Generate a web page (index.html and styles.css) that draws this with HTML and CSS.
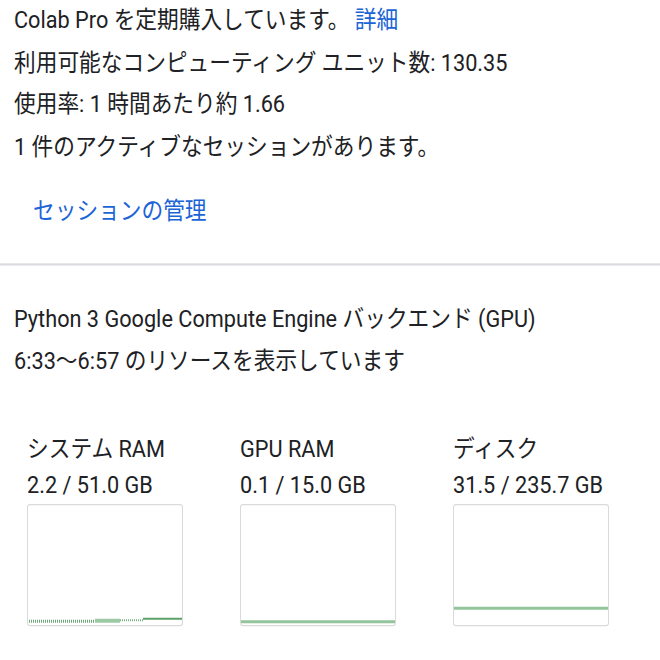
FILE: index.html
```html
<!DOCTYPE html>
<html lang="ja">
<head>
<meta charset="utf-8">
<link rel="stylesheet" href="styles.css">
</head>
<body>
<div class="panel">
  <section class="sub">
    <div class="line">Colab Pro を定期購入しています。 <a class="link">詳細</a></div>
    <div class="line">利用可能なコンピューティング ユニット数: 130.35</div>
    <div class="line">使用率: 1 時間あたり約 1.66</div>
    <div class="line">1 件のアクティブなセッションがあります。</div>
    <div class="actions"><a class="btn">セッションの管理</a></div>
  </section>
  <hr class="divider">
  <section class="backend">
    <div class="line">Python 3 Google Compute Engine バックエンド (GPU)</div>
    <div class="line">6:33〜6:57 のリソースを表示しています</div>
  </section>
  <section class="charts">
    <div class="chart">
      <div class="label">システム RAM</div>
      <div class="label">2.2 / 51.0 GB</div>
      <div class="box">
        <svg viewBox="0 0 156 122" preserveAspectRatio="none">
          <line x1="0" y1="117" x2="68" y2="117" stroke="#6aa877" stroke-width="3" stroke-dasharray="1 1"/>
          <line x1="68" y1="116.5" x2="93" y2="116.5" stroke="#9ccaa5" stroke-width="4"/>
          <line x1="93" y1="116" x2="116" y2="116" stroke="#7cb487" stroke-width="2" stroke-dasharray="1 1"/>
          <line x1="116" y1="114.5" x2="156" y2="114.5" stroke="#5ba268" stroke-width="2"/>
        </svg>
      </div>
    </div>
    <div class="chart">
      <div class="label">GPU RAM</div>
      <div class="label">0.1 / 15.0 GB</div>
      <div class="box">
        <svg viewBox="0 0 156 122" preserveAspectRatio="none">
          <line x1="0" y1="117.5" x2="156" y2="117.5" stroke="#93c49c" stroke-width="3"/>
        </svg>
      </div>
    </div>
    <div class="chart">
      <div class="label">ディスク</div>
      <div class="label">31.5 / 235.7 GB</div>
      <div class="box">
        <svg viewBox="0 0 156 122" preserveAspectRatio="none">
          <line x1="0" y1="104" x2="156" y2="104" stroke="#93c49c" stroke-width="3"/>
        </svg>
      </div>
    </div>
  </section>
</div>
</body>
</html>
```
FILE: styles.css
```css
html, body {
  margin: 0;
  padding: 0;
  background: #ffffff;
}
body {
  font-family: Roboto, "Noto Sans CJK JP", sans-serif;
  font-size: 21.7px;
  color: #202124;
  min-height: 660px;
}
/* the captured panel is rendered slightly taller than wide */
.panel {
  width: 660px;
  min-height: 600px;
  transform: scaleY(1.12);
  transform-origin: 0 0;
}
.sub {
  padding: 0 14px;
}
.line {
  line-height: 37.5px;
  white-space: nowrap;
}
.sub .line:first-child {
  margin-top: -1px;
}
.link {
  color: #1a64d6;
}
.actions {
  padding: 21px 0 29px 19px;
}
.btn {
  display: inline-block;
  color: #1a64d6;
  line-height: 36px;
}
.divider {
  margin: 0;
  border: none;
  border-top: 2px solid #dadce0;
}
.backend {
  padding: 29px 14px 0;
}
.backend .line {
  line-height: 37px;
}
.charts {
  display: flex;
  gap: 57px;
  padding: 45px 0 0 27px;
}
.chart {
  width: 156px;
}
.label {
  line-height: 32px;
  white-space: nowrap;
}
.box {
  margin-top: 1px;
  width: 156px;
  height: 109px;
  box-sizing: border-box;
  border: 1.5px solid #dadada;
  border-radius: 3px;
  overflow: hidden;
}
.box svg {
  display: block;
  width: 156px;
  height: 109px;
  margin: -1.5px;
}
```
